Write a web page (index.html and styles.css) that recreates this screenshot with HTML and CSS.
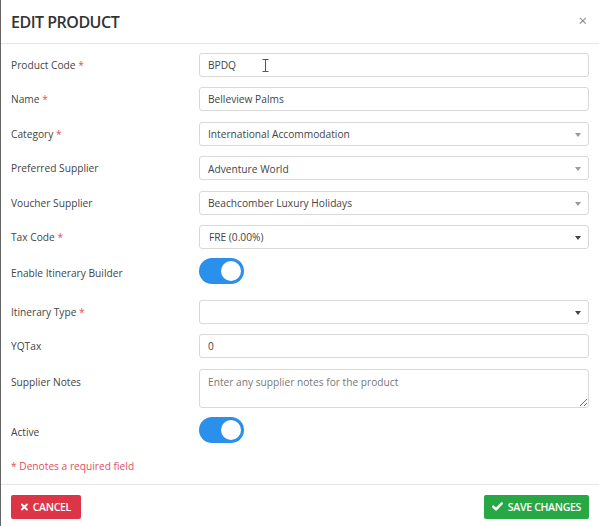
FILE: index.html
```html
<!DOCTYPE html>
<html lang="en">
<head>
    <meta charset="UTF-8">
    <meta name="viewport" content="width=device-width, initial-scale=1.0">
    <title>Edit Product</title>
    <link rel="stylesheet" href="styles.css">
</head>
<body>
    <div class="modal">
        <div class="modal-header">
            <h1 class="modal-title">EDIT PRODUCT</h1>
            <span class="close">&times;</span>
        </div>
        <form class="modal-body">
            <div class="form-row">
                <label>Product Code <span class="req">*</span></label>
                <div class="field-wrap">
                    <input class="field" type="text" value="BPDQ">
                    <svg class="text-cursor" width="7" height="13" viewBox="0 0 7 13"><path d="M0.5 0.5h6M3.5 0.5v12M0.5 12.5h6" stroke="#555" stroke-width="1" fill="none"/></svg>
                </div>
            </div>
            <div class="form-row">
                <label>Name <span class="req">*</span></label>
                <input class="field" type="text" value="Belleview Palms">
            </div>
            <div class="form-row">
                <label>Category <span class="req">*</span></label>
                <div class="field select light">International Accommodation</div>
            </div>
            <div class="form-row">
                <label>Preferred Supplier</label>
                <div class="field select light">Adventure World</div>
            </div>
            <div class="form-row">
                <label>Voucher Supplier</label>
                <div class="field select light">Beachcomber Luxury Holidays</div>
            </div>
            <div class="form-row">
                <label>Tax Code <span class="req">*</span></label>
                <div class="field select native">FRE (0.00%)</div>
            </div>
            <div class="form-row toggle-row">
                <label>Enable Itinerary Builder</label>
                <div class="switch on"><span class="knob"></span></div>
            </div>
            <div class="form-row">
                <label>Itinerary Type <span class="req">*</span></label>
                <div class="field select native"></div>
            </div>
            <div class="form-row">
                <label>YQTax</label>
                <input class="field" type="text" value="0">
            </div>
            <div class="form-row notes-row">
                <label>Supplier Notes</label>
                <textarea class="field notes" placeholder="Enter any supplier notes for the product"></textarea>
            </div>
            <div class="form-row toggle-row">
                <label>Active</label>
                <div class="switch on"><span class="knob"></span></div>
            </div>
            <p class="required-note">* Denotes a required field</p>
        </form>
        <div class="modal-footer">
            <button class="btn btn-cancel" type="button">
                <svg width="8" height="8" viewBox="0 0 8 8"><path d="M1 1L7 7M7 1L1 7" stroke="#fff" stroke-width="2.2" stroke-linecap="round"/></svg>
                CANCEL
            </button>
            <button class="btn btn-save" type="button">
                <svg width="11" height="9" viewBox="0 0 11 9"><path d="M1.2 4.6L4 7.4L9.8 1.4" stroke="#fff" stroke-width="2.4" fill="none" stroke-linecap="round" stroke-linejoin="round"/></svg>
                SAVE CHANGES
            </button>
        </div>
    </div>
</body>
</html>
```

FILE: styles.css
```css
body {
    margin: 0;
    background: #fff;
    font-family: 'Open Sans', 'Liberation Sans', Arial, sans-serif;
    color: #444;
}
.modal {
    width: 599px;
    height: 526px;
    box-sizing: border-box;
    border-left: 1px solid #666;
    background: #fff;
}
.modal-header {
    display: flex;
    align-items: center;
    justify-content: space-between;
    height: 43px;
    padding: 0 12px 0 10px;
    border-bottom: 1px solid #e6e6e6;
}
.modal-title {
    margin: 0;
    font-size: 16px;
    font-weight: 600;
    color: #333;
    letter-spacing: -0.5px;
}
.close {
    font-size: 15px;
    color: #888;
    margin-top: -4px;
}
.modal-body {
    padding: 9px 10px 0 10px;
    margin: 0;
}
.form-row {
    display: flex;
    align-items: center;
    margin-bottom: 10.4px;
}
.form-row label {
    width: 188px;
    flex: none;
    font-size: 10.2px;
    color: #444;
}
.req {
    color: #e0505f;
}
.field-wrap {
    position: relative;
    flex: 1;
    display: flex;
}
.field {
    flex: 1;
    box-sizing: border-box;
    height: 24px;
    margin: 0;
    border: 1px solid #d9d9d9;
    border-radius: 3px;
    padding: 0 8px;
    font-family: inherit;
    font-size: 10.2px;
    color: #444;
    background: #fff;
    outline: none;
}
.text-cursor {
    position: absolute;
    left: 63px;
    top: 6px;
}
.select {
    position: relative;
    display: flex;
    align-items: center;
    padding-top: 1px;
}
.select.native {
    padding-left: 9px;
}
.select::after {
    content: "";
    position: absolute;
    right: 7px;
    top: 10px;
    border-left: 3px solid transparent;
    border-right: 3px solid transparent;
    border-top: 4px solid #999;
}
.select.native::after {
    border-top-color: #444;
}
.toggle-row {
    height: 30px;
    margin-top: -1px;
    margin-bottom: 11.5px;
}
.switch {
    position: relative;
    width: 45px;
    height: 26px;
    border-radius: 13px;
    background: #2b8fec;
    margin-top: -4px;
}
.knob {
    position: absolute;
    top: 3px;
    right: 3px;
    width: 20px;
    height: 20px;
    border-radius: 50%;
    background: #fff;
}
.notes-row {
    align-items: flex-start;
}
.notes-row label {
    padding-top: 6px;
}
.notes {
    height: 39px;
    padding: 5px 8px;
    resize: vertical;
}
.notes::placeholder {
    color: #777;
}
.required-note {
    margin: 11px 0 0;
    font-size: 10.2px;
    color: #e0505f;
    height: 25px;
}
.modal-footer {
    display: flex;
    justify-content: space-between;
    align-items: flex-start;
    height: 41px;
    padding: 10px 10px 0 10px;
    box-sizing: border-box;
    border-top: 1px solid #e3e7ec;
}
.btn {
    display: flex;
    align-items: center;
    gap: 5px;
    height: 24px;
    border: none;
    border-radius: 2px;
    color: #fff;
    font-family: inherit;
    font-size: 10.5px;
    font-weight: 600;
    letter-spacing: -0.3px;
    white-space: nowrap;
    padding: 0 10px;
    cursor: pointer;
}
.btn-cancel {
    background: #dc3545;
    width: 70px;
}
.btn-save {
    background: #28a745;
    padding: 0 8px;
}
```
